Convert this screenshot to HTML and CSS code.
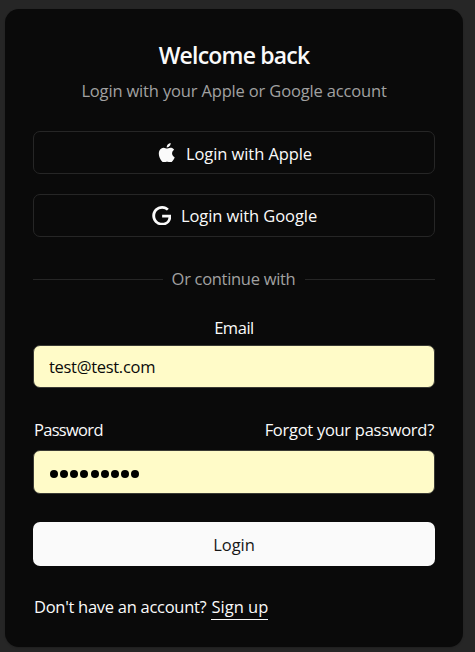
FILE: index.html
```html
<!DOCTYPE html>
<html lang="en">
<head>
<meta charset="utf-8">
<title>Login</title>
<link rel="stylesheet" href="styles.css">
</head>
<body>
<main class="card">
  <header class="header">
    <h1 class="title">Welcome back</h1>
    <p class="subtitle">Login with your Apple or Google account</p>
  </header>
  <form class="form">
    <div class="providers">
      <button class="button outline apple" type="button">
        <svg class="icon" viewBox="0 0 24 24"><path fill="currentColor" d="M12.152 6.896c-.948 0-2.415-1.078-3.96-1.04-2.04.027-3.91 1.183-4.961 3.014-2.117 3.675-.546 9.103 1.519 12.09 1.013 1.454 2.208 3.09 3.792 3.039 1.52-.065 2.09-.987 3.935-.987 1.831 0 2.35.987 3.96.948 1.637-.026 2.676-1.48 3.676-2.948 1.156-1.688 1.636-3.325 1.662-3.415-.039-.013-3.182-1.221-3.22-4.857-.026-3.04 2.48-4.494 2.597-4.559-1.429-2.09-3.623-2.324-4.39-2.376-2-.156-3.675 1.09-4.61 1.09zM15.53 3.83c.843-1.012 1.4-2.427 1.245-3.83-1.207.052-2.662.805-3.532 1.818-.78.896-1.454 2.338-1.273 3.714 1.338.104 2.715-.688 3.559-1.701"/></svg>
        <span>Login with Apple</span>
      </button>
      <button class="button outline" type="button">
        <svg class="icon" viewBox="0 0 24 24"><path fill="currentColor" d="M12.48 10.92v3.28h7.84c-.24 1.84-.853 3.187-1.787 4.133-1.147 1.147-2.933 2.4-6.053 2.4-4.827 0-8.6-3.893-8.6-8.72s3.773-8.72 8.6-8.72c2.6 0 4.507 1.027 5.907 2.347l2.307-2.307C18.747 1.44 16.133 0 12.48 0 5.867 0 .307 5.387.307 12s5.56 12 12.173 12c3.573 0 6.267-1.173 8.373-3.36 2.16-2.16 2.84-5.213 2.84-7.667 0-.76-.053-1.467-.173-2.053H12.48z"/></svg>
        <span>Login with Google</span>
      </button>
    </div>
    <div class="divider">Or continue with</div>
    <div class="field">
      <label class="label centered" for="email">Email</label>
      <input class="input email" id="email" type="text" value="test@test.com">
    </div>
    <div class="field password-field">
      <div class="label-row">
        <span class="label password-label">Password</span>
        <a class="forgot">Forgot your password?</a>
      </div>
      <div class="input dots"><i></i><i></i><i></i><i></i><i></i><i></i><i></i><i></i><i></i></div>
    </div>
    <button class="button primary" type="button">Login</button>
  </form>
  <p class="footer"><span class="question">Don't have an account?</span> <a class="signup">Sign up</a></p>
</main>
</body>
</html>
```
FILE: styles.css
```css
* { box-sizing: border-box; }

body {
  margin: 0;
  padding: 9px 0 0 5px;
  height: 652px;
  overflow: hidden;
  background: #262626;
  color: #fafafa;
  font: 16.5px/24px "Segoe UI", "Open Sans", "Noto Sans", sans-serif;
  letter-spacing: -0.28px;
}

.card {
  width: 458px;
  height: 638px;
  padding: 34px 28px 0;
  border-radius: 14px;
  background: #0a0a0a;
  box-shadow: 0 1px 2px rgba(0, 0, 0, 0.2);
}

.header { text-align: center; }
.title { margin: 0; font-size: 23px; line-height: 24px; font-weight: 600; letter-spacing: -0.8px; }
.subtitle { margin: 12px 0 0; color: #a1a1a1; letter-spacing: -0.16px; }

.providers { display: grid; gap: 20px; margin-top: 28px; }

.button {
  display: flex;
  align-items: center;
  justify-content: center;
  width: 100%;
  height: 43px;
  padding: 0;
  border: 1px solid #262626;
  border-radius: 7px;
  background: transparent;
  color: #fafafa;
  font: inherit;
  letter-spacing: inherit;
}
.outline { gap: 9.5px; padding-left: 1px; letter-spacing: -0.08px; }
.apple span { padding-top: 2px; }
.icon { width: 19.5px; height: 19.5px; flex: none; }

.divider {
  display: flex;
  align-items: center;
  gap: 9px;
  height: 24px;
  margin-top: 30px;
  color: #a1a1a1;
  letter-spacing: -0.3px;
}
.divider::before, .divider::after { content: ""; flex: 1; height: 1px; background: #262626; }
.divider::after { margin-left: 1px; }

.field { margin-top: 25px; }
.label { display: block; }
.centered { text-align: center; letter-spacing: -0.45px; }

.input {
  display: block;
  width: 100%;
  height: 43px;
  margin-top: 5px;
  padding: 0 15px;
  border: 1px solid #3a3a34;
  border-radius: 7px;
  background: #fffbc8;
  color: #0a0a0a;
  font: inherit;
  letter-spacing: -0.3px;
}

.password-field { margin-top: 30px; }
.label-row { display: flex; justify-content: space-between; }
.password-label { padding-left: 1px; letter-spacing: -0.7px; }
.forgot { padding-right: 1px; letter-spacing: -0.28px; }
.dots { display: flex; align-items: center; gap: 2.15px; height: 44px; margin-top: 8px; padding: 4px 0 0 16px; }
.dots i { width: 8px; height: 8px; border-radius: 50%; background: #000; }

.primary { height: 44px; margin-top: 28px; padding-top: 2px; border: 0; background: #fafafa; color: #171717; letter-spacing: -0.05px; }

.footer { display: flex; gap: 5px; margin: 29px 0 0; }
.question { padding-left: 1px; }
.signup { border-bottom: 1px solid #fafafa; letter-spacing: 0; }
```
